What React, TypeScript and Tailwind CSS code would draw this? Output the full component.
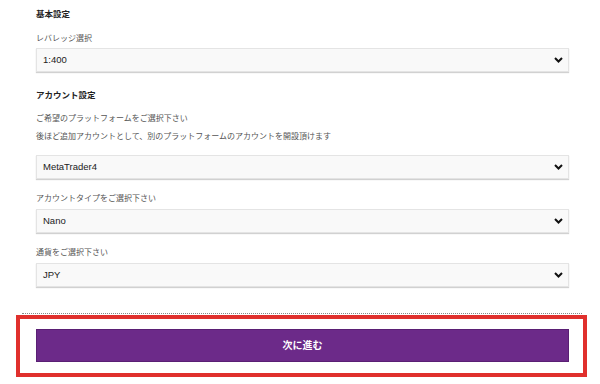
type SelectBoxProps = {
  value: string;
  className?: string;
};

function SelectBox({ value, className = "" }: SelectBoxProps) {
  return (
    <div
      className={`flex h-[24px] items-center justify-between border border-[#e4e4e4] bg-[#f9f9f9] pl-[6px] pr-[5px] shadow-[0_1px_1px_rgba(0,0,0,0.18)] ${className}`}
    >
      <span className="text-[9.5px] leading-none text-[#222]">{value}</span>
      <svg width="9" height="6" viewBox="0 0 9 6" aria-hidden="true">
        <path d="M1 1l3.5 3.5L8 1" fill="none" stroke="#111" strokeWidth="2" />
      </svg>
    </div>
  );
}

export default function App() {
  return (
    <div className="h-[384px] w-[600px] bg-white font-['Liberation_Sans','Noto_Sans_CJK_JP',sans-serif]">
      <div className="ml-[36px] w-[533px] pt-[8px]">
        <h2 className="text-[8.5px] font-bold leading-[12px] text-[#222]">基本設定</h2>
        <p className="mt-[13px] text-[8px] leading-[12px] text-[#555]">レバレッジ選択</p>
        <SelectBox value="1:400" className="mt-[3px]" />

        <h2 className="mt-[17px] text-[8.5px] font-bold leading-[12px] text-[#222]">アカウント設定</h2>
        <p className="mt-[12px] text-[8px] leading-[12px] text-[#555]">ご希望のプラットフォームをご選択下さい</p>
        <p className="mt-[6px] text-[8px] leading-[12px] text-[#555]">
          後ほど追加アカウントとして、別のプラットフォームのアカウントを開設頂けます
        </p>
        <SelectBox value="MetaTrader4" className="mt-[12px]" />

        <p className="mt-[14px] text-[8px] leading-[12px] text-[#555]">アカウントタイプをご選択下さい</p>
        <SelectBox value="Nano" className="mt-[4px]" />

        <p className="mt-[14px] text-[8px] leading-[12px] text-[#555]">通貨をご選択下さい</p>
        <SelectBox value="JPY" className="mt-[4px]" />
      </div>

      <div className="ml-[22px] mt-[26px] w-[560px] border-t border-dotted border-[#888]" />

      <div className="ml-[16px] mt-[1px] w-[571px] border-[4px] border-[#e0302d] pb-[11px] pl-[16px] pr-[14px] pt-[10px]">
        <button
          type="button"
          className="flex h-[33px] w-full items-center justify-center border border-[#5a1f74] bg-[#6c2a89] text-[10px] font-bold text-white"
        >
          次に進む
        </button>
      </div>
    </div>
  );
}
